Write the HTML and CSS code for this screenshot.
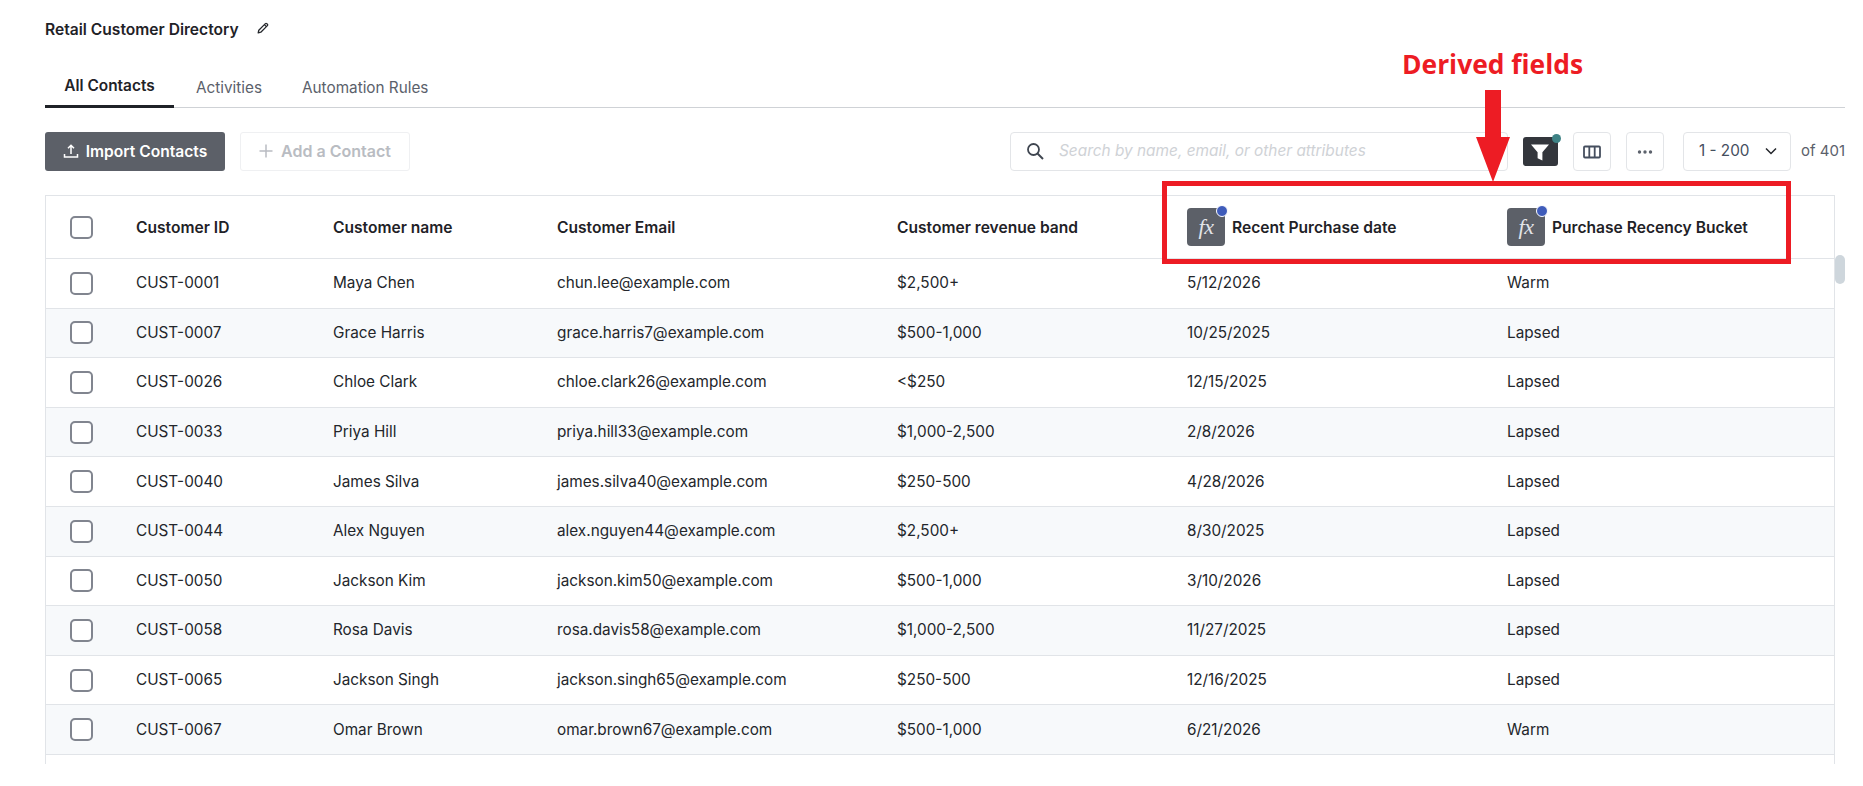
FILE: index.html
```html
<!DOCTYPE html>
<html lang="en">
<head>
<meta charset="utf-8">
<title>Retail Customer Directory</title>
<link rel="stylesheet" href="styles.css">
</head>
<body>
<main class="page">
  <header class="title-row">
    <h1 class="title">Retail Customer Directory</h1>
    <svg class="pencil" viewBox="0 0 12 12" width="12" height="12"><path d="M1.2 10.8l.6-2.6L8.4 1.6a.9.9 0 0 1 1.3 0l.7.7a.9.9 0 0 1 0 1.3L3.800 10.200z" fill="none" stroke="#23262b" stroke-width="1.300" stroke-linejoin="round"/><path d="M7.400 2.600l2 2" stroke="#23262b" stroke-width="1.300"/></svg>
  </header>
  <nav class="tabs">
    <a class="tab tab-active">All Contacts</a>
    <a class="tab">Activities</a>
    <a class="tab">Automation Rules</a>
  </nav>
  <div class="toolbar">
    <button class="btn btn-primary">
      <svg viewBox="0 0 16 16" width="16" height="16"><path d="M8 11V2.500M5 5.300L8 2.300l3 3M1.500 11v3h13v-3" fill="none" stroke="#fff" stroke-width="1.500"/></svg>
      Import Contacts
    </button>
    <button class="btn btn-ghost">
      <svg viewBox="0 0 14 14" width="14" height="14"><path d="M7 .5v13M.5 7h13" stroke="#b9bcc2" stroke-width="1.500"/></svg>
      Add a Contact
    </button>
    <div class="spacer"></div>
    <div class="search">
      <svg viewBox="0 0 18 18" width="18" height="18"><circle cx="7.500" cy="7.500" r="5.500" fill="none" stroke="#3f4650" stroke-width="1.800"/><path d="M11.500 11.500l5.500 5.500" stroke="#3f4650" stroke-width="2"/></svg>
      <span class="search-text">Search by name, email, or other attributes</span>
    </div>
    <div class="filter">
      <svg viewBox="0 0 20 20" width="20" height="20"><path d="M1 2.500h18l-6.600 7.700V18.500l-4.800-2.200v-6.100z" fill="#fff"/></svg>
      <span class="filter-dot"></span>
    </div>
    <div class="icon-btn">
      <svg viewBox="0 0 18 14" width="18" height="14"><rect x="1" y="1.500" width="16" height="11" rx="1" fill="none" stroke="#454e5e" stroke-width="1.800"/><path d="M6.300 1.500v11M11.700 1.500v11" stroke="#454e5e" stroke-width="1.800"/></svg>
    </div>
    <div class="icon-btn">
      <svg viewBox="0 0 16 4" width="16" height="4"><circle cx="2.500" cy="2" r="1.700" fill="#5c626c"/><circle cx="8" cy="2" r="1.700" fill="#5c626c"/><circle cx="13.500" cy="2" r="1.700" fill="#5c626c"/></svg>
    </div>
    <div class="pager">
      <span>1 - 200</span>
      <svg viewBox="0 0 12 8" width="12" height="8"><path d="M1 1.500L6 6.500l5-5" fill="none" stroke="#23262b" stroke-width="1.500"/></svg>
    </div>
    <span class="of">of 401</span>
  </div>
  <section class="table">
    <div class="row head">
      <div class="cell"><span class="check"></span></div>
      <div class="cell">Customer ID</div>
      <div class="cell">Customer name</div>
      <div class="cell">Customer Email</div>
      <div class="cell">Customer revenue band</div>
      <div class="cell derived"><span class="fx"><i>fx</i></span>Recent Purchase date</div>
      <div class="cell derived"><span class="fx"><i>fx</i></span>Purchase Recency Bucket</div>
    </div>
    <div class="row"><div class="cell"><span class="check"></span></div><div class="cell">CUST-0001</div><div class="cell">Maya Chen</div><div class="cell">chun.lee@example.com</div><div class="cell">$2,500+</div><div class="cell">5/12/2026</div><div class="cell">Warm</div></div>
    <div class="row"><div class="cell"><span class="check"></span></div><div class="cell">CUST-0007</div><div class="cell">Grace Harris</div><div class="cell">grace.harris7@example.com</div><div class="cell">$500-1,000</div><div class="cell">10/25/2025</div><div class="cell">Lapsed</div></div>
    <div class="row"><div class="cell"><span class="check"></span></div><div class="cell">CUST-0026</div><div class="cell">Chloe Clark</div><div class="cell">chloe.clark26@example.com</div><div class="cell">&lt;$250</div><div class="cell">12/15/2025</div><div class="cell">Lapsed</div></div>
    <div class="row"><div class="cell"><span class="check"></span></div><div class="cell">CUST-0033</div><div class="cell">Priya Hill</div><div class="cell">priya.hill33@example.com</div><div class="cell">$1,000-2,500</div><div class="cell">2/8/2026</div><div class="cell">Lapsed</div></div>
    <div class="row"><div class="cell"><span class="check"></span></div><div class="cell">CUST-0040</div><div class="cell">James Silva</div><div class="cell">james.silva40@example.com</div><div class="cell">$250-500</div><div class="cell">4/28/2026</div><div class="cell">Lapsed</div></div>
    <div class="row"><div class="cell"><span class="check"></span></div><div class="cell">CUST-0044</div><div class="cell">Alex Nguyen</div><div class="cell">alex.nguyen44@example.com</div><div class="cell">$2,500+</div><div class="cell">8/30/2025</div><div class="cell">Lapsed</div></div>
    <div class="row"><div class="cell"><span class="check"></span></div><div class="cell">CUST-0050</div><div class="cell">Jackson Kim</div><div class="cell">jackson.kim50@example.com</div><div class="cell">$500-1,000</div><div class="cell">3/10/2026</div><div class="cell">Lapsed</div></div>
    <div class="row"><div class="cell"><span class="check"></span></div><div class="cell">CUST-0058</div><div class="cell">Rosa Davis</div><div class="cell">rosa.davis58@example.com</div><div class="cell">$1,000-2,500</div><div class="cell">11/27/2025</div><div class="cell">Lapsed</div></div>
    <div class="row"><div class="cell"><span class="check"></span></div><div class="cell">CUST-0065</div><div class="cell">Jackson Singh</div><div class="cell">jackson.singh65@example.com</div><div class="cell">$250-500</div><div class="cell">12/16/2025</div><div class="cell">Lapsed</div></div>
    <div class="row"><div class="cell"><span class="check"></span></div><div class="cell">CUST-0067</div><div class="cell">Omar Brown</div><div class="cell">omar.brown67@example.com</div><div class="cell">$500-1,000</div><div class="cell">6/21/2026</div><div class="cell">Warm</div></div>
  </section>
  <div class="scroll-thumb"></div>
  <div class="anno-label">Derived fields</div>
  <svg class="anno-arrow" viewBox="0 0 34 92" width="34" height="92"><path d="M9 0h16v47h9L17 92 0 47h9z" fill="#ed1c24"/></svg>
  <div class="anno-box"></div>
</main>
</body>
</html>
```
FILE: styles.css
```css
* { box-sizing: border-box; }
html, body { margin: 0; height: 100%; overflow: hidden; background: #fff; }
body { font-family: Inter, "Liberation Sans", sans-serif; color: #23262b; }
.page { position: relative; height: 786px; padding-left: 45px; padding-right: 18px; }

.title-row { display: flex; align-items: center; gap: 18px; height: 58px; }
.title { margin: 0; font-size: 15.6px; font-weight: 600; color: #1f2227; }
.pencil { margin-top: -2px; }

.tabs { display: flex; height: 50px; border-bottom: 1px solid #cfd2d6; }
.tab { display: flex; align-items: center; justify-content: center; padding: 8px 20px 0; margin-bottom: -1px; font-size: 15.3px; color: #5b616b; height: 50px; }
.tab:first-child { width: 129px; margin-right: 2px; padding-left: 0; padding-right: 0; }
.tab-active { font-weight: 600; font-size: 15.4px; color: #1f2227; border-bottom: 3px solid #1f2227; padding-top: 8px; }

.toolbar { display: flex; align-items: center; height: 39px; margin-top: 24px; width: 1800px; font-size: 15px; }
.btn { display: flex; align-items: center; gap: 7px; height: 39px; padding-bottom: 2px; border-radius: 3px; font: 600 15.6px Inter, "Liberation Sans", sans-serif; }
.btn-primary { width: 180px; justify-content: center; background: #5c6068; color: #fff; border: 0; }
.btn-ghost { width: 170px; margin-left: 15px; justify-content: center; background: #fff; color: #b9bcc2; border: 1px solid #eff0f2; gap: 8px; font-size: 16px; }
.spacer { flex: 1; }
.search { display: flex; align-items: center; gap: 15px; width: 498px; height: 39px; padding: 0 0 2px 15px; border: 1px solid #e3e5e8; border-radius: 4px; }
.search-text { font-style: italic; color: #cfd2d6; font-size: 15.4px; }
.filter { position: relative; display: flex; align-items: center; justify-content: center; width: 35px; height: 29px; margin-left: 15px; background: #33363c; border-radius: 3px; }
.filter-dot { position: absolute; top: -3px; right: -3px; width: 9px; height: 9px; border-radius: 50%; background: #3e8285; }
.icon-btn { display: flex; align-items: center; justify-content: center; width: 38px; height: 39px; margin-left: 15px; border: 1px solid #e3e5e8; border-radius: 4px; }
.pager { display: flex; align-items: center; justify-content: space-between; width: 108px; height: 39px; margin-left: 19px; padding: 0 13px 2px 15px; border: 1px solid #e3e5e8; border-radius: 4px; color: #454e5e; font-size: 15.3px; }
.of { margin-left: 10px; padding-bottom: 2px; color: #5b616b; font-size: 15px; white-space: nowrap; }

.table { height: 569px; width: 1790px; margin-top: 24px; overflow: hidden; border: 1px solid #e1e4e8; border-bottom: 0; font-size: 15.3px; }
.row { display: grid; grid-template-columns: 90px 197px 224px 340px 290px 320px 1fr; align-items: center; height: 49.6px; padding-bottom: 1px; border-bottom: 1px solid #e1e4e8; }
.row:nth-child(odd) { background: #f7f9fb; }
.row.head { height: 63px; background: #fff; font-weight: 600; font-size: 15.6px; color: #1f2227; padding-bottom: 0; }
.row .cell:first-child { padding-top: 1px; }
.row.head .cell:first-child { padding-top: 0; }
.cell { display: flex; align-items: center; white-space: nowrap; }
.cell:first-child { padding-left: 24px; }
.check { display: block; width: 23px; height: 23px; border: 2px solid #81858f; border-radius: 5px; background: #fff; }
.derived { gap: 7px; }
.fx { position: relative; display: flex; align-items: center; justify-content: center; width: 38px; height: 38px; background: #5c6068; border-radius: 4px; color: #e3e5e8; }
.fx i { font: italic 400 22px "Liberation Serif", serif; letter-spacing: -0.5px; }
.fx::after { content: ""; position: absolute; top: -3px; right: -3px; width: 10px; height: 10px; border-radius: 50%; background: #3f5cba; border: 1px solid #fff; }

.scroll-thumb { position: absolute; left: 1835px; top: 255px; width: 10px; height: 29px; background: #ced6dc; border-radius: 5px; }
.anno-label { position: absolute; left: 1402px; top: 46px; font: 700 26.4px "Open Sans", "Liberation Sans", sans-serif; color: #ed1c24; white-space: nowrap; }
.anno-arrow { position: absolute; left: 1476px; top: 90px; }
.anno-box { position: absolute; left: 1162px; top: 181px; width: 629px; height: 83px; border: 5px solid #ed1c24; }
```
